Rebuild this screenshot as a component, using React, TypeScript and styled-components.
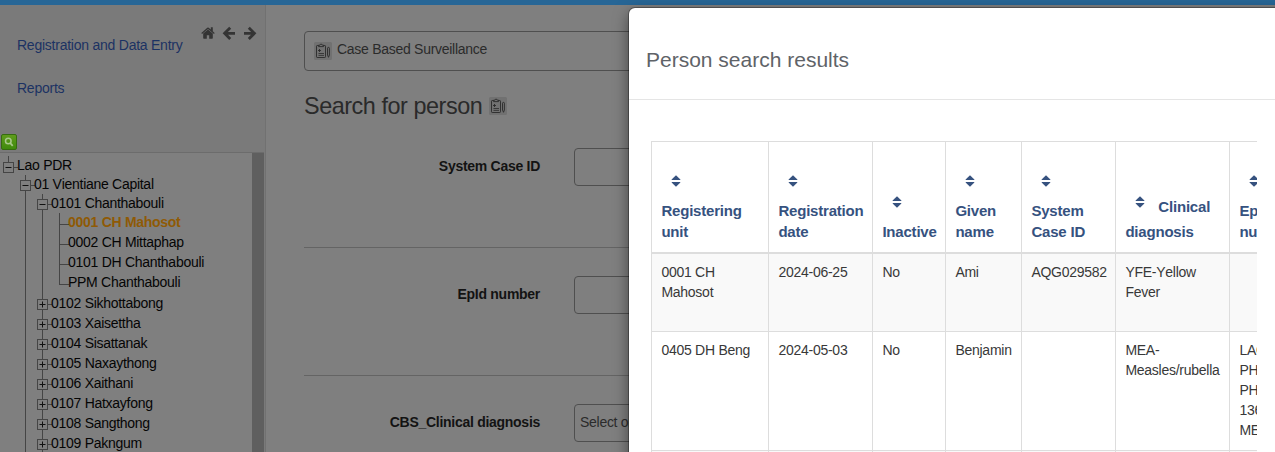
import React from 'react';
import styled, { createGlobalStyle, css } from 'styled-components';

const Global = createGlobalStyle`
  * { box-sizing: border-box; }
  body {
    margin: 0;
    overflow: hidden;
    background: #7f7f7f;
    font-family: "Liberation Sans", Arial, sans-serif;
    font-size: 14px;
    line-height: 20px;
    letter-spacing: -0.28px;
    font-kerning: none;
  }
`;

const Page = styled.div`
  height: 452px;
  overflow: hidden;
  display: flex;
  flex-direction: column;
`;

const TopBar = styled.div`
  flex: none;
  height: 5px;
  background: #276696;
`;

const Body = styled.div`
  flex: 1;
  min-height: 0;
  display: flex;
`;

const Sidebar = styled.aside`
  flex: none;
  width: 266px;
  display: flex;
  flex-direction: column;
  background: #7a7a7a;
  border-right: 1px solid #717171;
`;

const SidebarTop = styled.div`
  height: 128px;
  padding: 20px 8px 0 17px;
  display: flex;
  justify-content: space-between;
`;

const Links = styled.nav`
  display: flex;
  flex-direction: column;
  gap: 23px;
  padding-top: 10px;
  letter-spacing: -0.24px;
`;

const Link = styled.a`
  color: #1c3263;
  white-space: nowrap;
`;

const NavIcons = styled.div`
  display: flex;
  gap: 7px;
  height: 16px;
  color: #343434;
`;

const SearchButton = styled.button`
  flex: none;
  margin: 1px 0 2px 1px;
  width: 16px;
  height: 16px;
  padding: 0;
  border: 1px solid #356c0f;
  border-radius: 2px;
  background: linear-gradient(#5f9c1c, #3f8a0c);
  display: flex;
  align-items: center;
  justify-content: center;
`;

const TreePanel = styled.div`
  flex: 1;
  min-height: 0;
  margin-right: 1px;
  border-top: 1px solid #6c6c6c;
  background: #7f7f7f;
  display: flex;
  overflow: hidden;
`;

const Scrollbar = styled.div`
  flex: none;
  width: 12px;
  background: #5f5f5f;
`;

const Tree = styled.div`
  flex: 1;
  padding-top: 3px;
  overflow: hidden;
`;

const Node = styled.div<{ $h: number }>`
  display: flex;
  height: ${p => p.$h}px;
`;

const NodeLabel = styled.span<{ $active?: boolean; $low?: boolean }>`
  line-height: ${p => (p.$low ? 21 : 19)}px;
  white-space: nowrap;
  color: #050505;
  ${p => p.$active && css`color: #8f5a05; font-weight: bold;`}
`;

const Main = styled.main`
  flex: 1;
  padding: 26px 0 0 38px;
  background: #7f7f7f;
  color: #2b2b2b;
`;

const ProgramSelect = styled.div`
  height: 40px;
  padding: 0 9px;
  border: 1px solid #4f4f4f;
  border-radius: 4px;
  display: flex;
  align-items: center;
  gap: 5px;
`;

const ProgramName = styled.span`
  padding-bottom: 4px;
`;

const Heading = styled.h3`
  margin: 20px 0 0;
  height: 29px;
  display: flex;
  align-items: center;
  gap: 7px;
  font-size: 23.4px;
  font-weight: normal;
  line-height: 30px;
  letter-spacing: -0.45px;
  color: #2a2a2a;
`;

const FieldRow = styled.div`
  height: 128px;
  padding-top: 28px;
  border-bottom: 1px solid #646464;
  display: flex;
  align-items: flex-start;
  gap: 34px;
`;

const FieldLabel = styled.label`
  width: 236px;
  line-height: 36px;
  text-align: right;
  font-weight: bold;
  color: #131313;
`;

const FieldBox = styled.div`
  flex: 1;
  height: 38px;
  padding: 0 5px;
  border: 1px solid #4f4f4f;
  border-radius: 4px;
  line-height: 35px;
  white-space: nowrap;
`;

const Modal = styled.section`
  position: absolute;
  left: 629px;
  top: 8px;
  width: 700px;
  height: 500px;
  background: #fff;
  border-radius: 6px;
  box-shadow: 0 0 0 1px rgba(0, 0, 0, 0.3), 0 5px 15px rgba(0, 0, 0, 0.5);
`;

const ModalHeader = styled.header`
  height: 92px;
  padding: 37px 17px 0;
  border-bottom: 1px solid #e5e5e5;
`;

const ModalTitle = styled.h4`
  margin: 0;
  font-size: 21px;
  font-weight: normal;
  line-height: 30px;
  letter-spacing: 0;
  color: #5f6368;
`;

const TableClip = styled.div`
  margin: 41px 0 0 22px;
  width: 606px;
  overflow: hidden;
`;

const Table = styled.table`
  width: 719px;
  table-layout: fixed;
  border-collapse: separate;
  border-spacing: 0;
  color: #383838;
  letter-spacing: -0.26px;
`;

const cell = css`
  border-right: 1px solid #ddd;
  border-bottom: 1px solid #ddd;
  text-align: left;
  &:first-child { border-left: 1px solid #ddd; }
`;

const Th = styled.th`
  ${cell}
  height: 113px;
  padding: 0 0 10px 9.4px;
  border-top: 1px solid #ddd;
  border-bottom: 2px solid #ddd;
  vertical-align: bottom;
  font-size: 15px;
  line-height: 21px;
  letter-spacing: -0.2px;
  color: #36527f;
`;

const Td = styled.td`
  ${cell}
  padding: 8px 0 0 9.4px;
  vertical-align: top;
`;

const Tr = styled.tr<{ $h: number; $odd?: boolean }>`
  height: ${p => p.$h}px;
  background: ${p => (p.$odd ? '#f9f9f9' : '#fff')};
`;

const SortBox = styled.span`
  display: inline-flex;
  width: 29px;
  height: 39px;
  padding-top: 1px;
  align-items: center;
  justify-content: center;
  vertical-align: 4px;
`;

const Sort = () => (
  <SortBox>
    <svg width="10" height="12" viewBox="0 0 10 12" fill="currentColor">
      <path d="M5 0.2 L9.4 4.4 Q9.6 5 9 5 H1 Q0.4 5 0.6 4.4Z" />
      <path d="M5 11.8 L9.4 7.6 Q9.6 7 9 7 H1 Q0.4 7 0.6 7.6Z" />
    </svg>
  </SortBox>
);

const Clipboard = () => (
  <svg width="18" height="18" viewBox="0 0 18 18" fill="none" stroke="#2a2a2a" strokeWidth="0.9">
    <rect width="18" height="18" rx="1.5" fill="#717171" stroke="none" />
    <path d="M4.5 3.5H3.2Q2.5 3.5 2.5 4.2V14.8Q2.5 15.5 3.2 15.5H10.8Q11.5 15.5 11.5 14.8V4.2Q11.5 3.5 10.8 3.5H9.5" />
    <path d="M4.6 4.6V3.2H5.8L6.3 2.3H7.9L8.4 3.2H9.6V4.6Z" />
    <path d="M5.5 7V10M4 8.5H7" />
    <path strokeWidth="0.8" d="M4.5 11.5H10M4.5 13.4H10" />
    <path d="M13.5 6.2Q13.5 5.4 14.5 5.4Q15.4 5.4 15.4 6.2V13L14.5 15.3L13.5 13Z" />
  </svg>
);

const Home = () => (
  <svg width="14" height="15" viewBox="0 -1 14 15" fill="currentColor">
    <path d="M7 3.5 L2.2 7.6V12.1Q2.2 12.8 2.9 12.8H5.8V9.2H8.2V12.8H11.1Q11.8 12.8 11.8 12.1V7.6Z" />
    <path d="M0.3 7.1 L6.3 1.7Q7 1.2 7.7 1.7L9.8 3.6V1.3H11.8V5.3L13.7 7.1L13 7.9L7 2.9L1 7.9Z" />
  </svg>
);

const Arrow = ({ right }: { right?: boolean }) => (
  <svg width="14" height="16" viewBox="0 0 14 16" fill="none" stroke="currentColor" strokeWidth="2.8">
    {right
      ? <path d="M1 8.3H11M5.8 2.7L11.4 8.3L5.8 13.9" />
      : <path d="M13 8.3H3M8.2 2.7L2.6 8.3L8.2 13.9" />}
  </svg>
);

type NodeData = { label: string; depth: number; h: number; kind: 'minus' | 'plus' | 'leaf'; active?: boolean; last?: boolean };

const nodes: NodeData[] = [
  { label: 'Lao PDR', depth: 0, h: 19, kind: 'minus' },
  { label: '01 Vientiane Capital', depth: 1, h: 19, kind: 'minus' },
  { label: '0101 Chanthabouli', depth: 2, h: 19, kind: 'minus' },
  { label: '0001 CH Mahosot', depth: 3, h: 20, kind: 'leaf', active: true },
  { label: '0002 CH Mittaphap', depth: 3, h: 20, kind: 'leaf' },
  { label: '0101 DH Chanthabouli', depth: 3, h: 20, kind: 'leaf' },
  { label: 'PPM Chanthabouli', depth: 3, h: 20, kind: 'leaf', last: true },
  ...['0102 Sikhottabong', '0103 Xaisettha', '0104 Sisattanak', '0105 Naxaythong', '0106 Xaithani',
    '0107 Hatxayfong', '0108 Sangthong', '0109 Pakngum'].map(
    label => ({ label, depth: 2, h: 20, kind: 'plus' as const })),
];

/* Connector lines and the expand box that precede a node's label. */
const Branch = ({ n }: { n: NodeData }) => {
  const w = 17 + n.depth * 17;
  const x = 8.5 + n.depth * 17;
  const y = n.kind === 'minus' && n.depth > 0 ? 10.5 : 11.5;
  return (
    <svg width={w} height={n.h} fill="none" stroke="#454545" style={{ overflow: 'visible' }}>
      {n.depth > 1 && <path d={`M25.5 0V${n.h}`} />}
      {n.depth > 2 && <path d={`M42.5 0V${n.h}`} />}
      {n.kind === 'leaf' ? (
        <path d={`M${x} 0V${n.last ? 12 : n.h}M${x} ${y}H${w + 1}`} />
      ) : (
        <>
          <path d={`M${x} 0V${y - 5}M${x + 5} ${y}H${w + 1}`} />
          {n.depth > 0 && <path d={`M${x} ${y + 5}V${n.h}`} />}
          <rect x={x - 5} y={y - 5} width="10" height="10" />
          <path stroke="#111" d={`M${x - 3} ${y}H${x + 3}${n.kind === 'plus' ? `M${x} ${y - 3}V${y + 3}` : ''}`} />
        </>
      )}
    </svg>
  );
};

const columns: [number, string[]][] = [
  [118, ['Registering', 'unit']],
  [104, ['Registration', 'date']],
  [73, ['Inactive']],
  [76, ['Given', 'name']],
  [94, ['System', 'Case ID']],
  [114, ['Clinical', 'diagnosis']],
  [140, ['EpId', 'number']],
];

const rows: { h: number; cells: string[][] }[] = [
  { h: 78, cells: [['0001 CH', 'Mahosot'], ['2024-06-25'], ['No'], ['Ami'], ['AQG029582'], ['YFE-Yellow', 'Fever'], []] },
  { h: 119, cells: [['0405 DH Beng'], ['2024-05-03'], ['No'], ['Benjamin'], [], ['MEA-', 'Measles/rubella'], ['LAO-', 'PHO-', 'PHO-', '136-', 'MEA']] },
  { h: 40, cells: [[], [], [], [], [], [], []] },
];

const Lines = ({ lines }: { lines: string[] }) => (
  <>
    {lines.map((l, i) => (
      <React.Fragment key={i}>{i > 0 && <br />}{l}</React.Fragment>
    ))}
  </>
);

export default function App() {
  return (
    <Page>
      <Global />
      <TopBar />
      <Body>
        <Sidebar>
          <SidebarTop>
            <Links>
              <Link>Registration and Data Entry</Link>
              <Link>Reports</Link>
            </Links>
            <NavIcons><Home /><Arrow /><Arrow right /></NavIcons>
          </SidebarTop>
          <SearchButton aria-label="Search">
            <svg width="12" height="12" viewBox="0 0 12 12" fill="none" stroke="#a9c88c">
              <circle cx="5.3" cy="5" r="2.8" strokeWidth="1.5" />
              <path d="M7.2 7L9.7 9.8" strokeWidth="1.8" />
            </svg>
          </SearchButton>
          <TreePanel>
            <Tree>
              {nodes.map(n => (
                <Node key={n.label} $h={n.h}>
                  <Branch n={n} />
                  <NodeLabel $active={n.active} $low={n.kind === 'plus'}>{n.label}</NodeLabel>
                </Node>
              ))}
            </Tree>
            <Scrollbar />
          </TreePanel>
        </Sidebar>
        <Main>
          <ProgramSelect><Clipboard /><ProgramName>Case Based Surveillance</ProgramName></ProgramSelect>
          <Heading>Search for person <Clipboard /></Heading>
          <FieldRow><FieldLabel>System Case ID</FieldLabel><FieldBox /></FieldRow>
          <FieldRow><FieldLabel>EpId number</FieldLabel><FieldBox /></FieldRow>
          <FieldRow><FieldLabel>CBS_Clinical diagnosis</FieldLabel><FieldBox>Select or search from the list</FieldBox></FieldRow>
        </Main>
      </Body>
      <Modal>
        <ModalHeader><ModalTitle>Person search results</ModalTitle></ModalHeader>
        <TableClip>
          <Table>
            <colgroup>{columns.map(([w], i) => <col key={i} style={{ width: w }} />)}</colgroup>
            <thead>
              <tr>
                {columns.map(([, label], i) => (
                  <Th key={i}>
                    <Sort />
                    {label[0] === 'Clinical' ? ' ' : <br />}
                    <Lines lines={label} />
                  </Th>
                ))}
              </tr>
            </thead>
            <tbody>
              {rows.map((r, i) => (
                <Tr key={i} $h={r.h} $odd={i % 2 === 0}>
                  {r.cells.map((c, j) => <Td key={j}><Lines lines={c} /></Td>)}
                </Tr>
              ))}
            </tbody>
          </Table>
        </TableClip>
      </Modal>
    </Page>
  );
}
